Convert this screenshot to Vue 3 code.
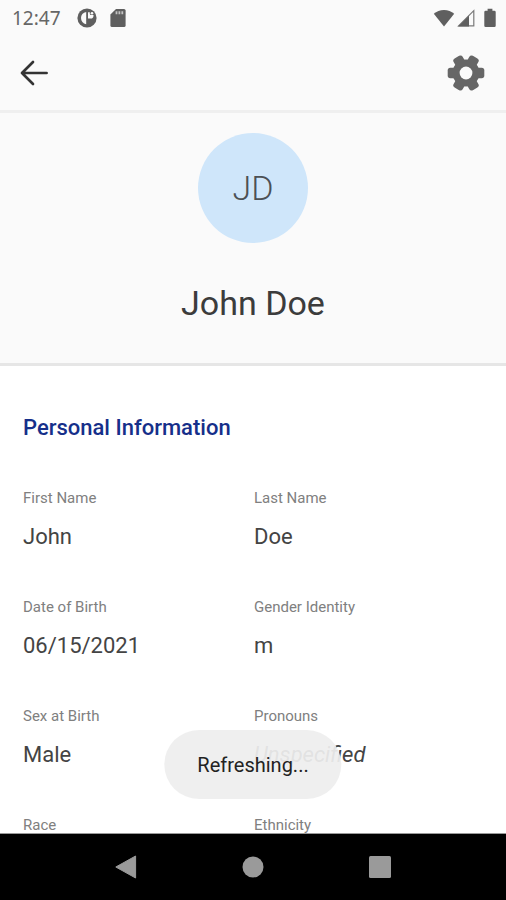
<script setup>
const fields = [
  { label: 'First Name', value: 'John' },
  { label: 'Last Name', value: 'Doe' },
  { label: 'Date of Birth', value: '06/15/2021' },
  { label: 'Gender Identity', value: 'm' },
  { label: 'Sex at Birth', value: 'Male' },
  { label: 'Pronouns', value: '' },
  { label: 'Race', value: '' },
  { label: 'Ethnicity', value: '' },
]
</script>

<template>
  <div class="screen">
    <div class="status">
      <span class="time">12:47</span>
      <svg class="app-icon" width="20" height="20" viewBox="0 0 20 20">
        <circle cx="10" cy="10" r="9.6" fill="#5f5f5f" />
        <path d="M9.200 4v12.200C6 15.600 4 13.200 4 10s2-5.400 5.200-6z" fill="#fafafa" />
        <path d="M11 4.200h1.800v1.600a1.300 1.300 0 0 0 1.300 1.300h2.400v.7a2.800 2.800 0 0 1-2.800 2.800H11z" fill="#fafafa" />
        <circle cx="15" cy="5.200" r="1.300" fill="#fafafa" />
      </svg>
      <svg class="sd-icon" width="16" height="20" viewBox="0 0 16 20">
        <path d="M6 1h8a1.600 1.600 0 0 1 1.600 1.600v14.800A1.600 1.600 0 0 1 14 19H2a1.600 1.600 0 0 1-1.600-1.600V6.500z" fill="#5f5f5f" />
        <path d="M5.600 3.200h1.800v3H5.600zM8.500 3.200h1.800v3H8.500zM11.400 3.200h1.800v3h-1.800z" fill="#c4c4c4" />
      </svg>
      <div class="signals">
        <svg width="22" height="18" viewBox="0 0 22 18">
          <path d="M11 17.600L.8 4.800C3.600 2.300 7 .9 11 .9s7.400 1.400 10.200 3.900z" fill="#5f5f5f" />
        </svg>
        <svg width="18" height="18" viewBox="0 0 18 18">
          <path d="M16.800 1.600v15.200H1.600z" fill="none" stroke="#7a7a7a" stroke-width="1.200" />
          <path d="M1 17.400L12 6.400v11z" fill="#5f5f5f" />
        </svg>
        <svg class="battery" width="12" height="20" viewBox="0 0 12 20">
          <path d="M3.600.8h4.800v2h2A1.300 1.300 0 0 1 11.700 4v13.700a1.300 1.300 0 0 1-1.300 1.300H1.600A1.300 1.300 0 0 1 .3 17.700V4a1.300 1.300 0 0 1 1.300-1.200h2z" fill="#5f5f5f" />
        </svg>
      </div>
    </div>

    <header class="bar">
      <button class="icon-btn" type="button" aria-label="Back">
        <svg width="28" height="26" viewBox="0 0 28 26">
          <path d="M26.600 13H2M13 2L2 13l11 11" fill="none" stroke="#333" stroke-width="2.700" stroke-linecap="round" stroke-linejoin="round" />
        </svg>
      </button>
      <button class="icon-btn" type="button" aria-label="Settings">
        <svg width="38" height="36" viewBox="-19 -18 38 36">
          <g fill="#666">
            <circle r="13.500" />
            <rect v-for="n in 3" :key="n" x="-18.300" y="-5.200" width="36.600" height="10.400" rx="2.600" :transform="`rotate(${n * 60})`" />
          </g>
          <circle r="6.400" fill="#fafafa" />
        </svg>
      </button>
    </header>

    <section class="profile">
      <div class="avatar">JD</div>
      <h1 class="name">John Doe</h1>
    </section>

    <main class="content">
      <h2 class="title">Personal Information</h2>
      <dl class="grid">
        <div v-for="f in fields" :key="f.label" class="field">
          <dt>{{ f.label }}</dt>
          <dd v-if="f.value">{{ f.value }}</dd>
          <dd v-else class="empty">Unspecified</dd>
        </div>
      </dl>
    </main>

    <nav class="nav">
      <button class="nav-btn" type="button" aria-label="Navigate back">
        <svg width="22" height="24" viewBox="0 0 22 24"><path d="M20.600 1v22L.8 12z" fill="#9a9a9a" stroke="#9a9a9a" stroke-linejoin="round" /></svg>
      </button>
      <button class="nav-btn" type="button" aria-label="Home">
        <svg width="22" height="22" viewBox="0 0 22 22"><circle cx="11" cy="11" r="10.500" fill="#9a9a9a" /></svg>
      </button>
      <button class="nav-btn" type="button" aria-label="Recent apps">
        <svg width="22" height="22" viewBox="0 0 22 22"><rect width="22" height="22" rx="1.500" fill="#9a9a9a" /></svg>
      </button>
    </nav>

    <div class="toast" role="status">Refreshing...</div>
  </div>
</template>

<style>
body {
  margin: 0;
}
</style>

<style scoped>
.screen {
  position: relative;
  display: flex;
  flex-direction: column;
  height: 100vh;
  overflow: hidden;
  background: #fff;
  color: #3c3c3c;
  font-family: Roboto, sans-serif;
}
.status {
  display: flex;
  align-items: center;
  height: 36px;
  flex: none;
  padding: 0 10px 0 12px;
  background: #fafafa;
  color: #666;
}
.time {
  font-family: "Noto Sans", sans-serif;
  font-size: 19px;
  line-height: 36px;
}
.app-icon {
  margin-left: 16px;
}
.sd-icon {
  margin-left: 13px;
}
.signals {
  display: flex;
  align-items: center;
  gap: 2px;
  margin-left: auto;
}
.battery {
  margin-left: 7px;
}
.bar {
  display: flex;
  justify-content: space-between;
  align-items: center;
  height: 74px;
  flex: none;
  padding: 0 21px 0 20px;
  background: #fafafa;
  border-bottom: 3px solid #efefef;
}
.icon-btn,
.nav-btn {
  display: flex;
  align-items: center;
  justify-content: center;
  padding: 0;
  border: 0;
  background: none;
}
.profile {
  display: flex;
  flex-direction: column;
  align-items: center;
  gap: 40px;
  flex: none;
  padding: 20px 0 40px;
  background: #fafafa;
  border-bottom: 3px solid #e6e6e6;
}
.avatar {
  width: 110px;
  height: 110px;
  border-radius: 50%;
  background: #cfe6fa;
  color: #4c5054;
  font-size: 34px;
  font-weight: 300;
  line-height: 110px;
  text-align: center;
}
.name {
  margin: 0;
  color: #3c3c3c;
  font-size: 34px;
  font-weight: 400;
  line-height: 40px;
}
.content {
  flex: 1;
  min-height: 0;
  padding: 48px 21px 0 23px;
  overflow: hidden;
}
.title {
  margin: 0 0 46px;
  color: #162f8a;
  font-size: 22px;
  font-weight: 500;
  line-height: 28px;
}
.grid {
  display: grid;
  grid-template-columns: 1fr 1fr;
  row-gap: 46px;
  margin: 0;
}
.field {
  display: flex;
  flex-direction: column;
  gap: 15px;
}
dt {
  color: #808080;
  font-size: 15px;
  line-height: 20px;
}
dd {
  margin: 0;
  color: #444;
  font-size: 22px;
  line-height: 28px;
}
.empty {
  font-style: italic;
}
.nav {
  display: flex;
  justify-content: space-around;
  align-items: center;
  height: 66px;
  flex: none;
  padding: 0 63px;
  background: #000;
  border-top: 1px solid #999;
}
.toast {
  position: absolute;
  bottom: 101px;
  left: 50%;
  transform: translateX(-50%);
  padding: 21px 33px 20px;
  border-radius: 35px;
  background: rgba(238, 238, 238, 0.93);
  color: #222;
  font-size: 20px;
  line-height: 28px;
}
</style>
